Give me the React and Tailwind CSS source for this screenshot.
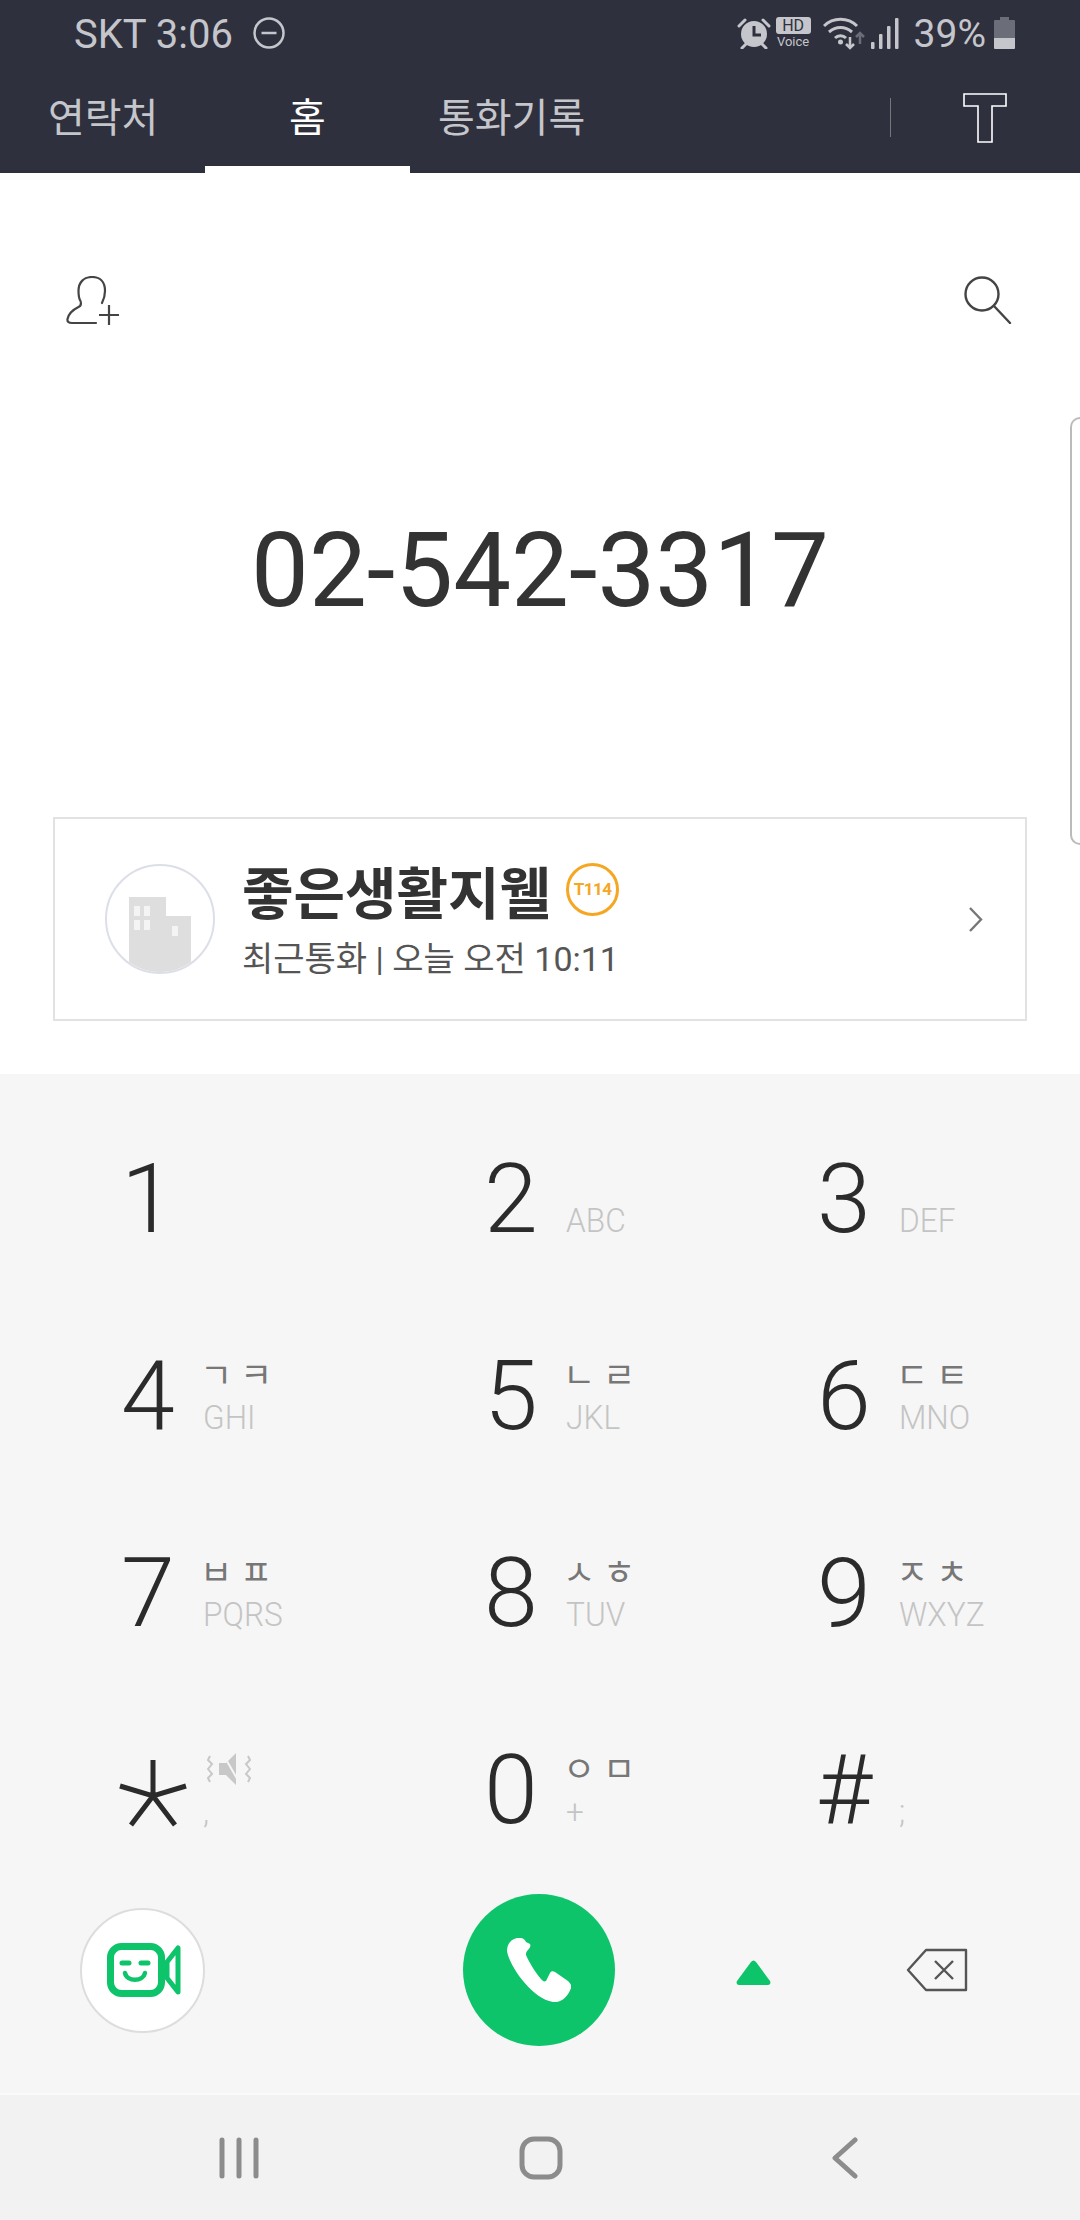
const sans = "font-['Roboto','Noto_Sans_CJK_KR',sans-serif]";

function DndIcon() {
  return (
    <svg width="32" height="32" viewBox="0 0 32 32" fill="none" stroke="#c5c6cb" strokeWidth="2.5">
      <circle cx="16" cy="16" r="14.5" />
      <path d="M8.5 16h15" />
    </svg>
  );
}

function AlarmIcon() {
  return (
    <svg width="34" height="32" viewBox="0 0 34 32" fill="none">
      <circle cx="17" cy="17" r="13" fill="#c5c6cb" />
      <path d="M17 9v9h7" stroke="#2f303e" strokeWidth="3" />
      <path d="M2 9l6-6M32 9l-6-6M5 31l4-4M29 31l-4-4" stroke="#c5c6cb" strokeWidth="3" strokeLinecap="round" />
    </svg>
  );
}

function WifiIcon() {
  return (
    <svg width="42" height="34" viewBox="0 0 42 34" fill="none">
      <path d="M1 10C10 1 25 1 34 10M6 16c7-6 16-6 23 0M12 22c3-3 8-3 11 0" stroke="#c5c6cb" strokeWidth="3" />
      <circle cx="17.5" cy="26" r="2.5" fill="#c5c6cb" />
      <path d="M27 21v11M23 28l4 4 4-4" stroke="#c5c6cb" strokeWidth="2.5" />
      <path d="M37 28V17M33 21l4-4 4 4" stroke="#6b6d78" strokeWidth="2.5" />
    </svg>
  );
}

function SignalIcon() {
  return (
    <svg width="28" height="31" viewBox="0 0 28 31" fill="#c5c6cb">
      <rect x="0" y="24" width="3.5" height="7" rx="1" />
      <rect x="8" y="16" width="3.5" height="15" rx="1" />
      <rect x="16" y="8" width="3.5" height="23" rx="1" />
      <rect x="24" y="0" width="3.5" height="31" rx="1" />
    </svg>
  );
}

function BatteryIcon() {
  return (
    <svg width="21" height="32" viewBox="0 0 21 32">
      <path d="M6 0h9v3h5a1 1 0 0 1 1 1v17H0V4a1 1 0 0 1 1-1h5z" fill="#6b6d78" />
      <path d="M0 21h21v10a1 1 0 0 1-1 1H1a1 1 0 0 1-1-1z" fill="#c5c6cb" />
    </svg>
  );
}

function TIcon() {
  return (
    <svg width="44" height="50" viewBox="0 0 44 50" fill="none" stroke="#fff" strokeWidth="1.6">
      <path d="M1 1h42v12H29v36H15V13H1z" />
    </svg>
  );
}

function AddContactIcon() {
  return (
    <svg width="56" height="50" viewBox="0 0 56 50" fill="none" stroke="#444" strokeWidth="2.2">
      <path d="M30 47H6c-3 0-5-1-4.500-4 1-5 5-9 11-12 2-1 3-3 2-6-2-3-2-6-2-10C12.500 6 18 1 26 1s13 5 13 14c0 4-1 8-3 12" strokeLinecap="round" />
      <path d="M43 29v20M33 39h20" />
    </svg>
  );
}

function SearchIcon() {
  return (
    <svg width="48" height="48" viewBox="0 0 48 48" fill="none" stroke="#444" strokeWidth="2.4">
      <circle cx="18" cy="18" r="16.5" />
      <path d="M30 30l16 17" strokeLinecap="round" />
    </svg>
  );
}

function BuildingAvatar() {
  return (
    <div className="w-[110px] h-[110px] shrink-0 rounded-full border-2 border-[#dcdfe8] overflow-hidden">
      <svg width="106" height="106" viewBox="0 0 106 106">
        <path d="M22 31h37v19h25v56H22z" fill="#dedede" />
        <path d="M27 40h6v10h-6zM37 40h6v10h-6zM27 54h6v10h-6zM37 54h6v10h-6zM65 60h6v10h-6z" fill="#f4f4f4" />
      </svg>
    </div>
  );
}

function VideoIcon() {
  return (
    <svg width="74" height="54" viewBox="0 0 74 54" fill="none">
      <rect x="3.500" y="3.500" width="51" height="47" rx="11" stroke="#0dc46b" strokeWidth="7" />
      <path d="M15 20h7M34 20h7" stroke="#0dc46b" strokeWidth="5" strokeLinecap="round" />
      <path d="M18 30c2 9 18 9 20 0" stroke="#0dc46b" strokeWidth="4.5" strokeLinecap="round" />
      <path d="M60 19l11-14v44L60 35z" stroke="#0dc46b" strokeWidth="5" strokeLinejoin="round" />
    </svg>
  );
}

function PhoneIcon() {
  return (
    <svg width="64" height="64" viewBox="0 0 64 64" fill="#fff">
      <path d="M10 0C4 1 0 6 0 13c2 14 24 47 46 51 8 1 15-5 18-14 1-3-1-5-3-7L48 34c-2-1-4-1-5 1l-4 8c-2 1-3 0-5-2-6-7-12-17-15-24 0-2 0-3 2-5 2-2 3-4 2-6L19 4c-1-3-5-5-9-4z" />
    </svg>
  );
}

function BackspaceIcon() {
  return (
    <svg width="62" height="44" viewBox="0 0 62 44" fill="none" stroke="#555" strokeWidth="2.4" strokeLinejoin="round">
      <path d="M20 2h40v40H20L2 22z" />
      <path d="M29 13l18 18M47 13L29 31" />
    </svg>
  );
}

function StarIcon() {
  return (
    <svg width="70" height="68" viewBox="0 0 70 68" fill="none" stroke="#2b2b2b" strokeWidth="5">
      <path d="M35 1v36M2 27l33 10 33-10M13 66l22-29 22 29" />
    </svg>
  );
}

function MuteVibrateIcon() {
  return (
    <svg width="44" height="32" viewBox="0 0 44 32" fill="none">
      <path d="M12 10h7l10-10v32l-10-10h-7z" fill="#c8c8c8" />
      <path d="M17 3l15 26" stroke="#f6f6f6" strokeWidth="2" />
      <path d="M3 3L1 7l4 4-4 5 4 5-4 4 2 4M41 3l2 4-4 4 4 5-4 5 4 4-2 4" stroke="#c8c8c8" strokeWidth="2" />
    </svg>
  );
}

const keys = [
  { digit: "1" },
  { digit: "2", latin: "ABC" },
  { digit: "3", latin: "DEF" },
  { digit: "4", jamo: "ㄱ ㅋ", latin: "GHI" },
  { digit: "5", jamo: "ㄴ ㄹ", latin: "JKL" },
  { digit: "6", jamo: "ㄷ ㅌ", latin: "MNO" },
  { digit: "7", jamo: "ㅂ ㅍ", latin: "PQRS" },
  { digit: "8", jamo: "ㅅ ㅎ", latin: "TUV" },
  { digit: "9", jamo: "ㅈ ㅊ", latin: "WXYZ" },
  { digit: "*", icon: true, latin: "," },
  { digit: "0", jamo: "ㅇ ㅁ", latin: "+" },
  { digit: "#", latin: ";" },
];

function DialKey({ item }) {
  return (
    <div className="flex items-center">
      <div className="w-[70px] h-[80px] pt-[2px] flex items-center justify-center text-[97px] leading-none font-light text-[#2b2b2b] font-['Roboto',sans-serif]">
        {item.icon ? (
          <span className="ml-[10px] mt-[4px] flex">
            <StarIcon />
          </span>
        ) : (
          item.digit
        )}
      </div>
      <div className="ml-[20px] h-[80px] flex flex-col">
        <div className="h-[42px] flex items-center">
          {item.icon ? (
            <span className="ml-[4px] mt-[-4px] flex">
              <MuteVibrateIcon />
            </span>
          ) : (
            item.jamo && (
              <span className="ml-[-3px] mt-[-8px] text-[35px] leading-none text-[#777] font-['Noto_Sans_CJK_KR',sans-serif] whitespace-pre">
                {item.jamo}
              </span>
            )
          )}
        </div>
        <div className="h-[38px] flex items-center">
          <span className="text-[34px] leading-none font-light text-[#c4c4c4] origin-left scale-x-[0.93] font-['Roboto',sans-serif]">
            {item.latin}
          </span>
        </div>
      </div>
    </div>
  );
}

export default function App() {
  return (
    <div className={`relative w-[1080px] h-[2220px] overflow-hidden bg-white flex flex-col ${sans}`}>
      {/* Status bar + tabs */}
      <header className="h-[173px] shrink-0 bg-[#2f303e] flex flex-col">
        <div className="h-[66px] pl-[74px] pr-[65px] flex items-center text-[#c5c6cb] text-[39px] leading-none">
          <span className="text-[40px] pt-[3px]">SKT 3:06</span>
          <span className="ml-[20px] flex">
            <DndIcon />
          </span>
          <div className="ml-auto flex items-center">
            <AlarmIcon />
            <div className="ml-[5px] w-[35px] flex flex-col items-center">
              <span className="w-[35px] h-[17px] rounded-[3px] bg-[#c5c6cb] text-[#2f303e] text-[16px] leading-[17px] text-center">HD</span>
              <span className="text-[13px] leading-[14px] mt-[1px]">Voice</span>
            </div>
            <span className="ml-[12px] flex">
              <WifiIcon />
            </span>
            <span className="ml-[6px] flex">
              <SignalIcon />
            </span>
            <span className="ml-[15px] pt-[3px]">39%</span>
            <span className="ml-[8px] flex">
              <BatteryIcon />
            </span>
          </div>
        </div>
        <nav className="flex-1 flex items-stretch text-[40px] text-[#c5c6cb] font-['Noto_Sans_CJK_KR',sans-serif]">
          <div className="w-[205px] pl-[48px] flex items-center pb-[10px]">연락처</div>
          <div className="relative w-[205px] flex items-center justify-center pb-[10px] text-white">
            홈
            <span className="absolute left-0 right-0 bottom-0 h-[7px] bg-white" />
          </div>
          <div className="pl-[28px] flex items-center pb-[10px]">통화기록</div>
          <div className="ml-auto flex items-center pb-[4px] pr-[73px]">
            <span className="w-[1.5px] h-[39px] bg-[#777] mr-[72px]" />
            <TIcon />
          </div>
        </nav>
      </header>

      {/* Search row + number + recent card */}
      <main className="h-[901px] shrink-0 relative flex flex-col">
        <div className="pl-[66px] pr-[68px] pt-[103px] flex justify-between items-start">
          <AddContactIcon />
          <SearchIcon />
        </div>
        <div className="h-[90px] mt-[199px] flex items-center justify-center text-[103px] leading-none text-[#333]">
          02-542-3317
        </div>
        <div className="mx-[53px] mt-[202px] h-[204px] border-2 border-[#e2e2e2] flex items-center pl-[50px] pr-[42px]">
          <BuildingAvatar />
          <div className="ml-[27px] flex-1">
            <div className="flex items-center">
              <span className="text-[56px] leading-[64px] font-bold text-[#333] font-['Noto_Sans_CJK_KR',sans-serif]">좋은생활지웰</span>
              <span className="ml-[15px] w-[53px] h-[53px] rounded-full border-[3px] border-[#f5a623] flex items-center justify-center text-[17px] font-bold text-[#f5a623] tracking-[-0.5px]">
                T114
              </span>
            </div>
            <div className="mt-[15px] text-[34px] leading-[44px] text-[#555]">최근통화 | 오늘 오전 10:11</div>
          </div>
          <svg width="15" height="25" viewBox="0 0 15 25" fill="none" stroke="#777" strokeWidth="2.4">
            <path d="M2 1l11 11.5L2 24" />
          </svg>
        </div>
        {/* edge panel handle */}
        <div className="absolute right-0 top-[244px] w-[10px] h-[428px] border-2 border-r-0 border-[#bbb] rounded-l-[14px]" />
      </main>

      {/* Keypad */}
      <section className="flex-1 bg-[#f6f6f6] flex flex-col">
        <div className="pt-[26px] pl-[113px] grid grid-cols-[363px_333px_1fr] auto-rows-[197px]">
          {keys.map((item) => (
            <DialKey key={item.digit} item={item} />
          ))}
        </div>
        <div className="relative h-[152px] mt-[6px] flex items-center">
          <div className="ml-[80px] w-[125px] h-[125px] rounded-full bg-white border-2 border-[#ddd] flex items-center justify-center pl-[2px]">
            <VideoIcon />
          </div>
          <div className="ml-[258px] w-[152px] h-[152px] rounded-full bg-[#0dc46b] flex items-center justify-center">
            <PhoneIcon />
          </div>
          <svg className="ml-[121px] mt-[4px]" width="35" height="25" viewBox="0 0 35 25" fill="#0dc46b">
            <path d="M15 2c1.500-2 3.500-2 5 0l14 19c1 2 0 4-2 4H3c-2 0-3-2-2-4z" />
          </svg>
          <span className="ml-[135px] flex">
            <BackspaceIcon />
          </span>
        </div>
      </section>

      {/* Navigation bar */}
      <footer className="h-[127px] shrink-0 bg-[#f2f2f2] border-t-2 border-[#fafafa] flex items-center">
        <svg className="ml-[219px]" width="40" height="42" viewBox="0 0 40 42" fill="none" stroke="#8c8c8c" strokeWidth="5" strokeLinecap="round">
          <path d="M3 3v36M20 3v36M37 3v36" />
        </svg>
        <svg className="ml-[260px]" width="44" height="44" viewBox="0 0 44 44" fill="none" stroke="#8c8c8c" strokeWidth="5">
          <rect x="3" y="3" width="38" height="38" rx="12" />
        </svg>
        <svg className="ml-[269px]" width="26" height="42" viewBox="0 0 26 42" fill="none" stroke="#8c8c8c" strokeWidth="5" strokeLinecap="round" strokeLinejoin="round">
          <path d="M23 3L3 21l20 18" />
        </svg>
      </footer>
    </div>
  );
}
